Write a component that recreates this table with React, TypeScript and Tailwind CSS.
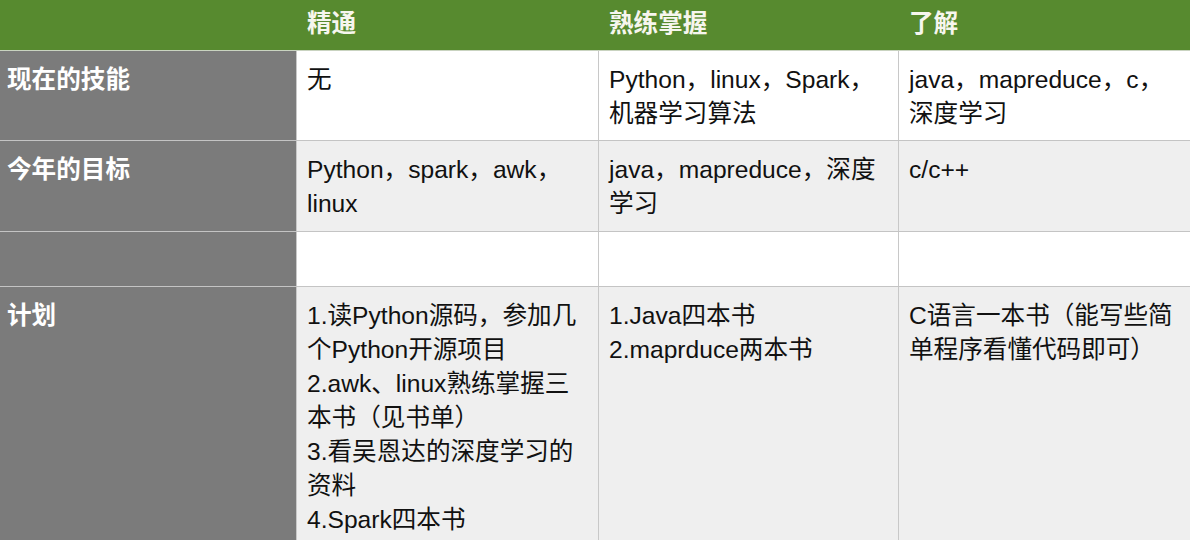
import React from 'react';

const font = { fontFamily: '"Liberation Sans", "Noto Sans CJK SC", sans-serif' };

const rows = [
  {
    label: '现在的技能',
    h: 'h-[90px]',
    bg: 'bg-white',
    cells: [['无'], ['Python，linux，Spark，', '机器学习算法'], ['java，mapreduce，c，', '深度学习']],
  },
  {
    label: '今年的目标',
    h: 'h-[91px]',
    bg: 'bg-[#efefef]',
    cells: [['Python，spark，awk，', 'linux'], ['java，mapreduce，深度', '学习'], ['c/c++']],
  },
  {
    label: '',
    h: 'h-[55px]',
    bg: 'bg-white',
    cells: [[], [], []],
  },
  {
    label: '计划',
    h: 'h-[260px]',
    bg: 'bg-[#efefef]',
    cells: [
      [
        '1.读Python源码，参加几',
        '个Python开源项目',
        '2.awk、linux熟练掌握三',
        '本书（见书单）',
        '3.看吴恩达的深度学习的',
        '资料',
        '4.Spark四本书',
      ],
      ['1.Java四本书', '2.maprduce两本书'],
      ['C语言一本书（能写些简', '单程序看懂代码即可）'],
    ],
  },
];

const widths = ['w-[302px]', 'w-[300px]', 'flex-1'];

export default function App() {
  return (
    <div className="w-[1190px] h-[540px] overflow-hidden bg-white text-[24.6px] leading-[34px]" style={font}>
      <div className="flex h-[51px] bg-[#578a2f] border-b border-[#c9d3c0] font-bold text-[#f6f6ee]">
        <div className="w-[296px]" />
        <div className="w-[302px] pl-[11px] pt-[7px]">精通</div>
        <div className="w-[300px] pl-[11px] pt-[7px]">熟练掌握</div>
        <div className="flex-1 pl-[11px] pt-[7px]">了解</div>
      </div>
      {rows.map((row, i) => (
        <div key={i} className={`flex ${row.h} border-b border-[#c4c4c4]`}>
          <div className="w-[296px] bg-[#7b7b7b] pl-[7px] pt-[12px] font-bold text-white">{row.label}</div>
          {row.cells.map((lines, j) => (
            <div
              key={j}
              className={`${widths[j]} ${row.bg} border-l border-[#c8c8c8] pl-[10px] pt-[12px] text-[#111]`}
            >
              {lines.map((line, k) => (
                <div key={k} className="whitespace-nowrap">{line}</div>
              ))}
            </div>
          ))}
        </div>
      ))}
    </div>
  );
}
